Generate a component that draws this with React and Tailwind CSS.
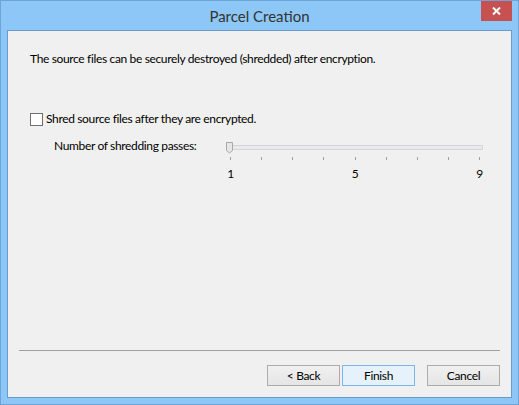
export default function App() {
  const ticks = [1, 2, 3, 4, 5, 6, 7, 8, 9];

  return (
    <div className="w-[519px] h-[405px] bg-[#8dc7f7] border border-[#6fa4d6] flex flex-col font-['Lato',sans-serif] select-none">
      {/* Title bar */}
      <div className="relative h-[29px] flex items-center justify-center">
        <span className="text-[15px] text-[#333333] leading-none pt-[1px]">Parcel Creation</span>
        <div className="absolute top-0 right-[6px] w-[31px] h-[20px] bg-[#c75050] flex items-center justify-center">
          <svg width="9" height="8" viewBox="0 0 9 8">
            <path d="M1 0.5 L8 7.5 M8 0.5 L1 7.5" stroke="#ffffff" strokeWidth="2" />
          </svg>
        </div>
      </div>

      {/* Client area */}
      <div className="mx-[6px] h-[368px] border border-[#6b9bcb] bg-[#f0f0f0] flex flex-col text-[12px] leading-[16px] tracking-[-0.35px] text-black">
        <p className="mt-[20px] ml-[22px]">
          The source files can be securely destroyed (shredded) after encryption.
        </p>

        <div className="mt-[44px] ml-[22px] flex items-start gap-[3px]">
          <div className="mt-[2px] w-[13px] h-[13px] border border-[#707070] bg-white" />
          <span>Shred source files after they are encrypted.</span>
        </div>

        <div className="mt-[11px] ml-[46px] flex items-start">
          <span className="w-[173px]">Number of shredding passes:</span>
          <div className="mt-[4px] w-[256px] flex flex-col">
            <div className="relative h-[11px]">
              <div className="mt-[3px] h-[5px] border border-[#d6d6d6] bg-[#e7eaea]" />
              <svg className="absolute left-[-1px] top-0" width="8" height="12" viewBox="0 0 8 12">
                <path d="M0.5 0.5 H6.5 V8.5 L3.5 11 L0.5 8.5 Z" fill="#e6e6e6" stroke="#a8a8a8" />
              </svg>
            </div>
            <div className="mt-[4px] px-[3px] flex justify-between">
              {ticks.map((t) => (
                <div key={t} className="w-px h-[3px] bg-[#a0a0a0]" />
              ))}
            </div>
            <div className="mt-[6px] px-[3px] flex justify-between">
              {["1", "5", "9"].map((n) => (
                <div key={n} className="w-px flex justify-center">
                  <span>{n}</span>
                </div>
              ))}
            </div>
          </div>
        </div>

        <div className="mt-auto mx-[11px] mb-[11px] flex flex-col">
          <div className="h-px bg-[#a0a0a0]" />
          <div className="mt-[14px] flex justify-end">
            <button className="w-[73px] h-[21px] border border-[#acacac] bg-gradient-to-b from-[#f0f0f0] to-[#e5e5e5] text-[12px] leading-none">
              &lt; Back
            </button>
            <button className="ml-[2px] w-[73px] h-[21px] border border-[#7eb4ea] bg-[#e5f1fb] text-[12px] leading-none">
              Finish
            </button>
            <button className="ml-[12px] w-[73px] h-[21px] border border-[#acacac] bg-gradient-to-b from-[#f0f0f0] to-[#e5e5e5] text-[12px] leading-none">
              Cancel
            </button>
          </div>
        </div>
      </div>
    </div>
  );
}
